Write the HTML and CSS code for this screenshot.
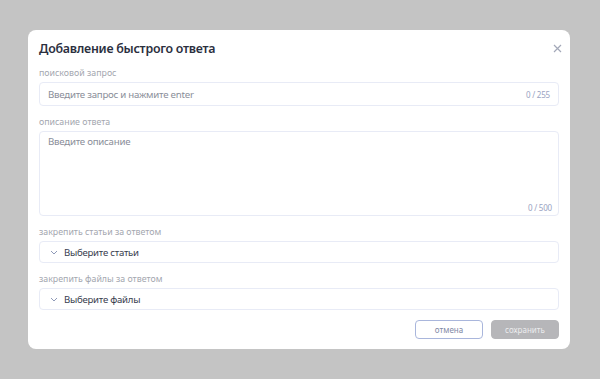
FILE: index.html
```html
<!DOCTYPE html>
<html lang="ru">
<head>
  <meta charset="UTF-8" />
  <title>Быстрый ответ</title>
  <link rel="stylesheet" href="styles.css">
</head>
<body>
  <div class="modal">
    <div class="modal-head">
      <h1>Добавление быстрого ответа</h1>
      <svg class="close" width="9" height="9" viewBox="0 0 9 9"><path d="M1 1 L8 8 M8 1 L1 8" stroke="#a3a8b8" stroke-width="1.2" fill="none"/></svg>
    </div>

    <div class="field">
      <div class="label">поисковой запрос</div>
      <div class="input">
        <span class="placeholder">Введите запрос и нажмите enter</span>
        <span class="counter">0 / 255</span>
      </div>
    </div>

    <div class="field">
      <div class="label">описание ответа</div>
      <div class="textarea">
        <span class="placeholder">Введите описание</span>
        <span class="counter">0 / 500</span>
      </div>
    </div>

    <div class="field">
      <div class="label">закрепить статьи за ответом</div>
      <div class="select">
        <svg class="chevron" width="8" height="5" viewBox="0 0 8 5"><path d="M1 1 L4 4 L7 1" stroke="#8f9ab8" stroke-width="1" fill="none"/></svg>
        <span>Выберите статьи</span>
      </div>
    </div>

    <div class="field last">
      <div class="label">закрепить файлы за ответом</div>
      <div class="select">
        <svg class="chevron" width="8" height="5" viewBox="0 0 8 5"><path d="M1 1 L4 4 L7 1" stroke="#8f9ab8" stroke-width="1" fill="none"/></svg>
        <span>Выберите файлы</span>
      </div>
    </div>

    <div class="actions">
      <button class="btn cancel">отмена</button>
      <button class="btn save">сохранить</button>
    </div>
  </div>
</body>
</html>
```

FILE: styles.css
```css
body { margin: 0; height: 379px; background: #c4c4c4; font-family: "Noto Sans", sans-serif; overflow: hidden; }
.modal { width: 520px; margin: 30px 0 0 28px; background: #fff; border-radius: 8px; padding: 11px 11px 10px 11px; }
.modal-head { display: flex; justify-content: space-between; align-items: center; height: 14px; margin-bottom: 13px; }
.modal-head h1 { margin: 0; font-size: 12.4px; font-weight: 600; letter-spacing: -0.25px; color: #2b2f3e; }
.close { margin-right: -3px; }
.field { margin-bottom: 11px; }
.field.last { margin-bottom: 10px; }
.label { font-size: 8.8px; color: #a4a7af; height: 11px; line-height: 11px; margin-bottom: 3px; white-space: nowrap; }
.input, .textarea, .select { border: 1px solid #e8ebf6; border-radius: 4px; box-sizing: border-box; }
.input { height: 24px; display: flex; align-items: center; justify-content: space-between; padding: 0 8px; }
.placeholder { font-size: 9.7px; letter-spacing: -0.25px; color: #8a8e99; }
.counter { font-size: 8px; letter-spacing: -0.2px; color: #9aa3c2; }
.textarea { height: 85px; display: flex; flex-direction: column; justify-content: space-between; padding: 3px 6px 2px 8px; }
.textarea .counter { align-self: flex-end; }
.select { height: 22px; display: flex; align-items: center; padding: 0 10px; gap: 6px; font-size: 9.6px; letter-spacing: -0.25px; color: #383d4e; }
.actions { display: flex; justify-content: flex-end; gap: 8px; }
.btn { width: 68px; height: 19px; border-radius: 4px; font-family: inherit; font-size: 8px; padding: 0; }
.cancel { background: #fff; border: 1px solid #a9b6dc; color: #7f89a6; }
.save { background: #b6b6b9; border: 1px solid #b6b6b9; color: #ececee; }
```
